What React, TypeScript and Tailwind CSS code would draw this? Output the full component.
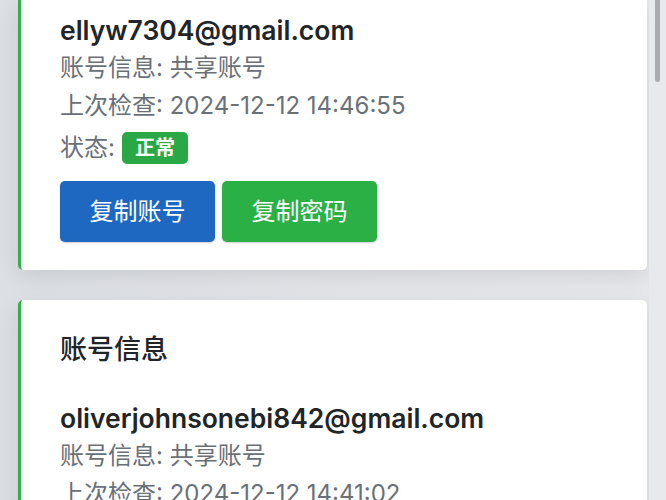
const accounts = [
  {
    email: "ellyw7304@gmail.com",
    info: "共享账号",
    checked: "2024-12-12 14:46:55",
    status: "正常",
    showTitle: false,
  },
  {
    email: "oliverjohnsonebi842@gmail.com",
    info: "共享账号",
    checked: "2024-12-12 14:41:02",
    status: "正常",
    showTitle: true,
  },
];

function AccountCard({ account, first }: { account: (typeof accounts)[number]; first: boolean }) {
  return (
    <article
      className={`rounded-[5px] border-l-[3px] border-[#2fb24a] bg-white pl-[39px] pb-[28px] shadow-[0_6px_22px_rgba(0,0,0,0.10)] ${
        first ? "rounded-t-none pt-[13px]" : "pt-[33px]"
      }`}
    >
      {account.showTitle && (
        <h2 className="mb-[34px] text-[27px] font-medium leading-[34px] text-[#212529]">账号信息</h2>
      )}
      <div className="text-[26.5px] font-semibold leading-[34px] text-[#212529]">{account.email}</div>
      <div className="mt-[2px] text-[24px] leading-[38px] text-[#6a7077]">账号信息: {account.info}</div>
      <div className="text-[24px] leading-[38px] text-[#6a7077]">上次检查: {account.checked}</div>
      <div className="mt-[2px] flex h-[42px] items-center gap-[7px] text-[24px] text-[#6a7077]">
        <span>状态:</span>
        <span className="rounded-[5px] bg-[#2aa845] px-[13px] py-[3px] text-[20px] font-bold leading-[26px] text-white">
          {account.status}
        </span>
      </div>
      <div className="mt-[12px] flex gap-[7px]">
        <button className="h-[61px] w-[155px] rounded-[5px] bg-[#1e68c2] text-[24px] text-white shadow-[0_1px_2px_rgba(0,0,0,0.2)]">
          复制账号
        </button>
        <button className="h-[61px] w-[155px] rounded-[5px] bg-[#2bb045] text-[24px] text-white shadow-[0_1px_2px_rgba(0,0,0,0.2)]">
          复制密码
        </button>
      </div>
    </article>
  );
}

export default function App() {
  return (
    <div
      className="flex h-[500px] w-[666px] overflow-hidden bg-gradient-to-r from-[#dcdfe3] via-[#e3e5e9] to-[#e6e8eb]"
      style={{ fontFamily: '"Inter", "Noto Sans CJK SC", sans-serif' }}
    >
      <main className="ml-[18px] flex w-[629px] flex-col gap-[30px]">
        {accounts.map((a, i) => (
          <AccountCard key={a.email} account={a} first={i === 0} />
        ))}
      </main>
      <aside className="ml-[2px] w-[17px] bg-[#e8e9ec]">
        <div className="mx-auto h-[82px] w-[5px] rounded-b-full bg-[#a9acb1]" />
      </aside>
    </div>
  );
}
